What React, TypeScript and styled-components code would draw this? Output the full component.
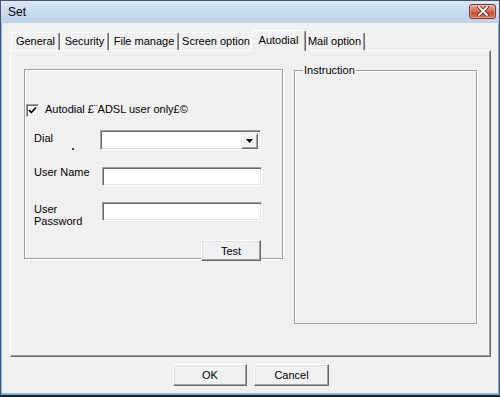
import React from 'react';
import styled, { createGlobalStyle } from 'styled-components';

const GlobalStyle = createGlobalStyle`
    html, body {
        margin: 0;
        padding: 0;
        background: #f0f0f0;
    }
    body {
        font-family: "Liberation Sans", Arial, sans-serif;
        font-size: 11px;
        color: #000;
    }
`;

interface TabDef {
    label: string;
    width: number;
}

const tabs: TabDef[] = [
    { label: 'General', width: 49 },
    { label: 'Security', width: 49 },
    { label: 'File manage', width: 70 },
    { label: 'Screen option', width: 74 },
    { label: 'Autodial', width: 55 },
    { label: 'Mail option', width: 61 }
];

const ACTIVE_TAB = 'Autodial';

export default function App() {
    return (
        <>
            <GlobalStyle />
            <Window>
                <TitleBar>
                    <Title>Set</Title>
                    <CloseButton>
                        <svg width="12" height="10" viewBox="0 0 12 10">
                            <path d="M2 1 L10 9 M10 1 L2 9" stroke="#5a1a10" strokeWidth="3.2" strokeLinecap="square" />
                            <path d="M2 1 L10 9 M10 1 L2 9" stroke="#fff" strokeWidth="1.8" strokeLinecap="square" />
                        </svg>
                    </CloseButton>
                </TitleBar>
                <Client>
                    <TabStrip>
                        {tabs.map((t) => (
                            <Tab key={t.label} $width={t.width} $active={t.label === ACTIVE_TAB}>
                                {t.label}
                            </Tab>
                        ))}
                    </TabStrip>
                    <Panel>
                        <GroupBox>
                            <CheckRow>
                                <CheckBox>
                                    <svg width="9" height="9" viewBox="0 0 9 9">
                                        <path d="M1 4 L3.3 6.5 L8 1.5" fill="none" stroke="#000" strokeWidth="1.8" />
                                    </svg>
                                </CheckBox>
                                <CheckLabel>Autodial £¨ADSL user only£©</CheckLabel>
                            </CheckRow>

                            <FieldRow $top={13}>
                                <FieldLabel $width={66} $offset={2}>
                                    Dial
                                    <DialMark />
                                </FieldLabel>
                                <Combo>
                                    <ComboButton>
                                        <svg width="7" height="4" viewBox="0 0 7 4">
                                            <path d="M0 0 H7 L3.5 4 Z" fill="#000" />
                                        </svg>
                                    </ComboButton>
                                </Combo>
                            </FieldRow>

                            <FieldRow $top={17}>
                                <FieldLabel $width={68} $offset={-1}>User Name</FieldLabel>
                                <TextBox />
                            </FieldRow>

                            <FieldRow $top={16}>
                                <FieldLabel $width={68} $offset={1}>
                                    User
                                    <br />
                                    Password
                                </FieldLabel>
                                <TextBox />
                            </FieldRow>

                            <ButtonRow>
                                <PushButton $width={60} $height={21}>Test</PushButton>
                            </ButtonRow>
                        </GroupBox>

                        <InstructionBox>
                            <Legend>Instruction</Legend>
                        </InstructionBox>
                    </Panel>
                    <Footer>
                        <PushButton $width={74} $height={22}>OK</PushButton>
                        <PushButton $width={75} $height={22}>Cancel</PushButton>
                    </Footer>
                </Client>
            </Window>
        </>
    );
}

const Window = styled.div`
    width: 500px;
    height: 397px;
    box-sizing: border-box;
    display: flex;
    flex-direction: column;
    border: 1px solid #4a5666;
    border-bottom-width: 2px;
    border-bottom-color: #1e2328;
    background: #f0f0f0;
`;

const TitleBar = styled.div`
    height: 22px;
    flex: none;
    display: flex;
    align-items: center;
    justify-content: space-between;
    padding: 0 3px 0 7px;
    background: linear-gradient(#dbe7f4, #c4d8ed 60%, #bfd4eb);
`;

const Title = styled.span`
    font-size: 12px;
    color: #000;
`;

const CloseButton = styled.div`
    width: 27px;
    height: 15px;
    box-sizing: border-box;
    margin-top: -2px;
    border: 1px solid #7a3426;
    border-radius: 3px;
    display: flex;
    align-items: center;
    justify-content: center;
    background: linear-gradient(#e9a89a, #d56a52 50%, #c24a30 51%, #d4775c);
    box-shadow: inset 0 0 0 1px rgba(255, 255, 255, 0.35);
`;

const Client = styled.div`
    flex: 1;
    display: flex;
    flex-direction: column;
    padding: 7px 7px 0 8px;
    border: 1px solid #79b4e6;
    border-top: none;
    border-bottom-width: 2px;
    background: #f0f0f0;
`;

const TabStrip = styled.div`
    height: 20px;
    flex: none;
    display: flex;
    align-items: flex-end;
    padding-left: 1px;
    position: relative;
    z-index: 1;
`;

const Tab = styled.div<{ $width: number; $active: boolean }>`
    width: ${(p) => p.$width}px;
    height: ${(p) => (p.$active ? 21 : 18)}px;
    box-sizing: border-box;
    flex: none;
    margin: ${(p) => (p.$active ? '0 -2px -1px -2px' : '0')};
    padding-top: ${(p) => (p.$active ? 3 : 2)}px;
    text-align: center;
    line-height: 13px;
    white-space: nowrap;
    overflow: hidden;
    background: #f0f0f0;
    border-top: 1px solid #fff;
    border-left: 1px solid #fff;
    border-right: 1px solid #696969;
    box-shadow: inset -1px 0 #a0a0a0;
    border-radius: 2px 2px 0 0;
    position: relative;
    z-index: ${(p) => (p.$active ? 2 : 0)};
`;

const Panel = styled.div`
    height: 307px;
    flex: none;
    box-sizing: border-box;
    display: flex;
    align-items: flex-start;
    gap: 11px;
    padding: 18px 0 0 13px;
    border-top: 1px solid #fff;
    border-left: 1px solid #fff;
    border-right: 1px solid #696969;
    border-bottom: 1px solid #696969;
    box-shadow: inset -1px -1px #a0a0a0;
`;

const Etched = styled.div`
    box-sizing: border-box;
    border: 1px solid #a0a0a0;
    box-shadow: inset 1px 1px #fff, 1px 1px #fff;
`;

const GroupBox = styled(Etched)`
    width: 259px;
    height: 190px;
    display: flex;
    flex-direction: column;
    padding-top: 34px;
`;

const InstructionBox = styled(Etched)`
    width: 183px;
    height: 254px;
    margin-top: 1px;
`;

const Legend = styled.span`
    display: inline-block;
    margin: -7px 0 0 8px;
    padding: 0 1px;
    line-height: 13px;
    background: #f0f0f0;
    vertical-align: top;
`;

const CheckRow = styled.div`
    display: flex;
    align-items: flex-start;
    padding-left: 1px;
`;

const CheckBox = styled.div`
    width: 13px;
    height: 13px;
    box-sizing: border-box;
    flex: none;
    display: flex;
    align-items: center;
    justify-content: center;
    background: #fff;
    border-top: 1px solid #a0a0a0;
    border-left: 1px solid #a0a0a0;
    border-right: 1px solid #fff;
    border-bottom: 1px solid #fff;
    box-shadow: inset 1px 1px #696969, inset -1px -1px #e3e3e3;
`;

const CheckLabel = styled.span`
    margin: -1px 0 0 6px;
    line-height: 13px;
    white-space: nowrap;
`;

const FieldRow = styled.div<{ $top: number }>`
    display: flex;
    align-items: flex-start;
    margin-top: ${(p) => p.$top}px;
    padding-left: 9px;
`;

const FieldLabel = styled.div<{ $width: number; $offset: number }>`
    width: ${(p) => p.$width}px;
    flex: none;
    margin-top: ${(p) => p.$offset}px;
    line-height: 12px;
`;

const DialMark = styled.div`
    width: 2px;
    height: 2px;
    margin: 4px 0 0 38px;
    background: #404040;
`;

const Sunken = styled.div`
    box-sizing: border-box;
    background: #fff;
    border-top: 1px solid #a0a0a0;
    border-left: 1px solid #a0a0a0;
    border-right: 1px solid #fff;
    border-bottom: 1px solid #fff;
    box-shadow: inset 1px 1px #696969, inset -1px -1px #e3e3e3;
`;

const Combo = styled(Sunken)`
    width: 161px;
    height: 20px;
    display: flex;
    justify-content: flex-end;
    padding: 2px;
`;

const ComboButton = styled.div`
    width: 17px;
    height: 16px;
    box-sizing: border-box;
    display: flex;
    align-items: center;
    justify-content: center;
    background: #f0f0f0;
    border-top: 1px solid #e3e3e3;
    border-left: 1px solid #e3e3e3;
    border-right: 1px solid #696969;
    border-bottom: 1px solid #696969;
    box-shadow: inset 1px 1px #fff, inset -1px -1px #a0a0a0;
`;

const TextBox = styled(Sunken)`
    width: 160px;
    height: 19px;
`;

const ButtonRow = styled.div`
    display: flex;
    justify-content: flex-end;
    margin-top: 13px;
    padding-right: 21px;
`;

const PushButton = styled.div<{ $width: number; $height: number }>`
    width: ${(p) => p.$width}px;
    height: ${(p) => p.$height}px;
    box-sizing: border-box;
    flex: none;
    display: flex;
    align-items: center;
    justify-content: center;
    background: #f0f0f0;
    border-top: 1px solid #fff;
    border-left: 1px solid #fff;
    border-right: 1px solid #696969;
    border-bottom: 1px solid #696969;
    box-shadow: inset -1px -1px #a0a0a0, inset 1px 1px #e3e3e3;
`;

const Footer = styled.div`
    display: flex;
    justify-content: center;
    gap: 7px;
    margin-top: 7px;
    padding-left: 1px;
`;
